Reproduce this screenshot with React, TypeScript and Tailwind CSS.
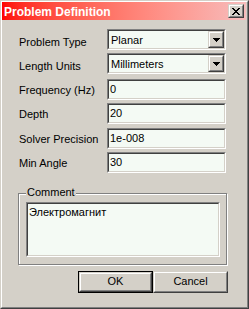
import React from "react";

const font = { fontFamily: '"Liberation Sans", Arial, sans-serif' };

const ArrowDown = () => (
  <svg width="7" height="4" viewBox="0 0 7 4" shapeRendering="crispEdges">
    <path d="M0 0H7V1H6V2H5V3H4V4H3V3H2V2H1V1H0Z" fill="#000" />
  </svg>
);

const CloseGlyph = () => (
  <svg width="8" height="7" viewBox="0 0 8 7" shapeRendering="crispEdges">
    <path
      d="M0 0H2V1H3V2H5V1H6V0H8V1H7V2H6V3H5V4H6V5H7V6H8V7H6V6H5V5H3V6H2V7H0V6H1V5H2V4H3V3H2V2H1V1H0Z"
      fill="#000"
    />
  </svg>
);

// classic sunken edit box
const Sunken: React.FC<{ children?: React.ReactNode; className?: string }> = ({
  children,
  className = "",
}) => (
  <div
    className={`border border-t-[#808080] border-l-[#808080] border-r-white border-b-white ${className}`}
  >
    <div className="w-full h-full border border-t-[#404040] border-l-[#404040] border-r-[#d4d0c8] border-b-[#d4d0c8] bg-[#f4faf4]">
      {children}
    </div>
  </div>
);

const Raised: React.FC<{ children?: React.ReactNode; className?: string }> = ({
  children,
  className = "",
}) => (
  <div
    className={`border border-t-[#d4d0c8] border-l-[#d4d0c8] border-r-[#404040] border-b-[#404040] bg-[#d4d0c8] ${className}`}
  >
    <div className="w-full h-full border border-t-white border-l-white border-r-[#808080] border-b-[#808080] flex items-center justify-center">
      {children}
    </div>
  </div>
);

const ComboRow: React.FC<{ label: string; value: string; top: string }> = ({
  label,
  value,
  top,
}) => (
  <div className={`flex items-start h-[21px] ${top}`}>
    <span className="w-[89px] pl-[1px] mt-[7px] leading-[13px]">{label}</span>
    <Sunken className="w-[119px] h-[21px]">
      <div className="flex h-full">
        <span className="flex-1 pl-[2px] pt-[3px] leading-[13px]">{value}</span>
        <Raised className="w-[16px] h-full">
          <ArrowDown />
        </Raised>
      </div>
    </Sunken>
  </div>
);

const EditRow: React.FC<{ label: string; value: string; top: string }> = ({
  label,
  value,
  top,
}) => (
  <div className={`flex items-start h-[21px] ${top}`}>
    <span className="w-[89px] pl-[1px] mt-[5px] leading-[13px]">{label}</span>
    <Sunken className="w-[119px] h-[21px]">
      <div className="pl-[1px] pt-[2px] leading-[13px]">{value}</div>
    </Sunken>
  </div>
);

export default function App() {
  return (
    <div
      className="w-[249px] h-[309px] flex border border-t-[#d4d0c8] border-l-[#d4d0c8] border-r-[#404040] border-b-[#404040] bg-[#d4d0c8] text-[11px] text-black"
      style={font}
    >
      <div className="flex-1 flex flex-col border border-t-white border-l-white border-r-[#808080] border-b-[#808080] pr-[1px] pb-[1px]">
        {/* Title bar */}
        <div className="h-[18px] flex items-center justify-between pl-[2px] pr-[2px] bg-linear-to-r from-[#ff0000] to-[#f6bcbc]">
          <span className="font-bold text-[12px] text-white leading-[14px] pt-[2px]">
            Problem Definition
          </span>
          <Raised className="w-[16px] h-[14px]">
            <CloseGlyph />
          </Raised>
        </div>

        {/* Body */}
        <div className="flex-1 flex flex-col pl-[16px]">
          <ComboRow label="Problem Type" value="Planar" top="mt-[9px]" />
          <ComboRow label="Length Units" value="Millimeters" top="mt-[3px]" />
          <EditRow label="Frequency (Hz)" value="0" top="mt-[5px]" />
          <EditRow label="Depth" value="20" top="mt-[3px]" />
          <EditRow label="Solver Precision" value="1e-008" top="mt-[4px]" />
          <EditRow label="Min Angle" value="30" top="mt-[3px]" />

          {/* Comment group */}
          <div className="relative mt-[20px] w-[209px] h-[72px] border border-[#808080] shadow-[inset_1px_1px_0_white,1px_1px_0_white]">
            <span className="absolute left-[7px] top-[-8px] px-[1px] bg-[#d4d0c8] leading-[13px]">
              Comment
            </span>
            <Sunken className="ml-[7px] mt-[8px] w-[194px] h-[55px]">
              <div className="pl-[1px] pt-[2px] leading-[13px]">Электромагнит</div>
            </Sunken>
          </div>

          {/* Buttons */}
          <div className="flex ml-[60px] mt-[6px]">
            <div className="w-[75px] h-[22px] border border-black">
              <Raised className="w-full h-full">
                <span className="leading-[13px] pb-[2px]">OK</span>
              </Raised>
            </div>
            <Raised className="w-[75px] h-[22px]">
              <span className="leading-[13px] pb-[2px]">Cancel</span>
            </Raised>
          </div>
        </div>
      </div>
    </div>
  );
}
